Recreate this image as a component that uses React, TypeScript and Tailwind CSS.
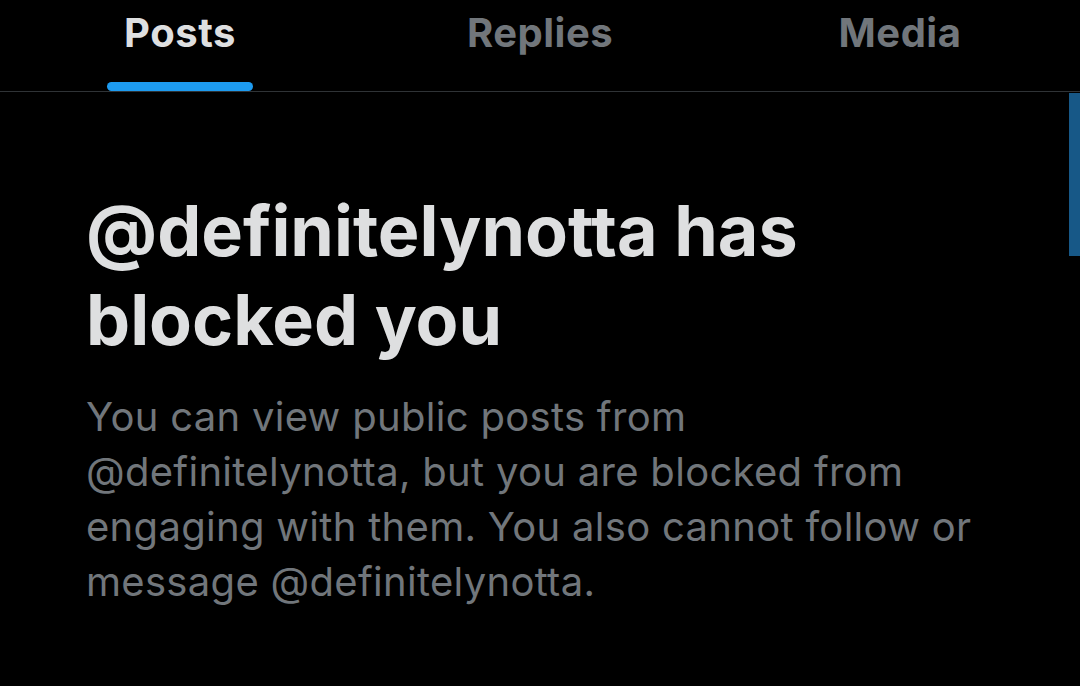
import React from "react";

export default function App() {
  return (
    <div className="w-[1080px] h-[686px] bg-black overflow-hidden relative" style={{ fontFamily: "Inter, 'Noto Sans', sans-serif" }}>
      <div className="flex h-[92px] border-b border-[#2f3336]">
        <div className="w-[360px] flex flex-col items-center">
          <div className="h-[82px] flex items-center pb-[16px] text-[40px] tracking-[0.5px] font-bold text-[#dedfe0]">Posts</div>
          <div className="w-[146px] h-[9px] rounded-full bg-[#1d9bf0]" />
        </div>
        <div className="w-[360px] flex flex-col items-center">
          <div className="h-[82px] flex items-center pb-[16px] text-[40px] tracking-[0.5px] font-bold text-[#71767b]">Replies</div>
        </div>
        <div className="w-[360px] flex flex-col items-center">
          <div className="h-[82px] flex items-center pb-[16px] text-[40px] tracking-[0.5px] font-bold text-[#71767b]">Media</div>
        </div>
      </div>
      <div className="absolute right-0 top-[93px] w-[11px] h-[163px] bg-[#175887]" />
      <div className="pl-[86px] pr-[96px] pt-[94px]">
        <h1 className="pr-[4px] text-[70px] leading-[89px] font-bold text-[#dedfe0]">@definitelynotta has blocked you</h1>
        <p className="mt-[25px] text-[40px] leading-[55px] tracking-[0.3px] text-[#71767b]">
          You can view public posts from @definitelynotta, but you are blocked from engaging with them. You also cannot follow or message @definitelynotta.
        </p>
      </div>
    </div>
  );
}
